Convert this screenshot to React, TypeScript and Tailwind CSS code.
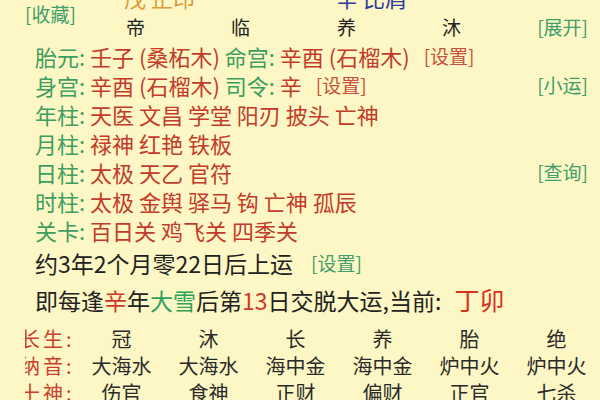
const G = "text-[#3c9e5f]";
const R = "text-[#c23b2c]";
const TAG_G = "text-[19px] text-[#3f9e6c]";

function Pillar({ label, items, tag }: { label: string; items: string; tag?: string }) {
  return (
    <div className="h-[29px] flex items-center whitespace-pre">
      <span className={G}>{label}: </span>
      <span className={R}>{items}</span>
      {tag ? <span className={"ml-auto " + TAG_G}>{tag}</span> : null}
    </div>
  );
}

function BottomRow({ label, values }: { label: string; values: string[] }) {
  return (
    <div className="h-[27px] flex items-center">
      <div className="ml-[25px] w-[60px] overflow-hidden whitespace-nowrap">
        <span className="block -ml-[5px] tracking-[3px] text-[20px] text-[#c8402f]">{label}:</span>
      </div>
      <div className="grid grid-cols-[87px_87px_87px_87px_87px_87px] text-center text-[20px] text-[#2a2a2a] whitespace-nowrap">
        {values.map((v, i) => (
          <span key={i}>{v}</span>
        ))}
      </div>
    </div>
  );
}

export default function App() {
  return (
    <div className="w-[600px] h-[400px] overflow-hidden bg-[#fcf7c4] font-['Noto_Sans_CJK_SC',sans-serif] text-[#222]">
      {/* header */}
      <div className="flex -mt-[18px]">
        <div className={"w-[126px] pl-[25px] pt-[22px] leading-[20px] " + TAG_G}>[收藏]</div>
        <div className="flex-1 flex flex-col">
          <div className="h-[30px] flex items-center text-[22px] whitespace-pre">
            <span className="w-[212px] -ml-[2px] text-[#df9a3c]">戊 正印</span>
            <span className="text-[#2f3c9e]">辛 比肩</span>
          </div>
          <div className="h-[30px] flex items-center justify-between pr-[12px]">
            <div className="grid grid-cols-[105px_106px_105px_40px] text-[19px] text-[#222]">
              <span>帝</span>
              <span>临</span>
              <span>养</span>
              <span>沐</span>
            </div>
            <span className={TAG_G}>[展开]</span>
          </div>
        </div>
      </div>

      {/* pillars */}
      <div className="flex flex-col text-[22px] pl-[35px] pr-[12px]">
        <div className="h-[29px] flex items-center whitespace-pre">
          <span className={G}>胎元: </span>
          <span className={R}>壬子 (桑柘木) </span>
          <span className={G}>命宫: </span>
          <span className={R}>辛酉 (石榴木)</span>
          <span className="ml-[14px] text-[19px] text-[#c8503c]">[设置]</span>
        </div>
        <div className="h-[29px] flex items-center whitespace-pre">
          <span className={G}>身宫: </span>
          <span className={R}>辛酉 (石榴木) </span>
          <span className={G}>司令: </span>
          <span className={R}>辛</span>
          <span className="ml-[14px] text-[19px] text-[#c8503c]">[设置]</span>
          <span className={"ml-auto " + TAG_G}>[小运]</span>
        </div>
        <Pillar label="年柱" items="天医 文昌 学堂 阳刃 披头 亡神" />
        <Pillar label="月柱" items="禄神 红艳 铁板" />
        <Pillar label="日柱" items="太极 天乙 官符" tag="[查询]" />
        <Pillar label="时柱" items="太极 金舆 驿马 钩 亡神 孤辰" />
        <Pillar label="关卡" items="百日关 鸡飞关 四季关" />
      </div>

      {/* luck start */}
      <div className="h-[36px] flex items-center pl-[35px] text-[23px] text-[#222] whitespace-pre">
        <span>约3年2个月零22日后上运</span>
        <span className={"ml-[18px] " + TAG_G}>[设置]</span>
      </div>
      <div className="h-[38px] flex items-center pl-[35px] text-[23px] text-[#222] whitespace-pre">
        <span>即每逢</span>
        <span className="text-[#d0392a]">辛</span>
        <span>年</span>
        <span className="text-[#2fa35a]">大雪</span>
        <span>后第</span>
        <span className="text-[#d0392a]">13</span>
        <span>日交脱大运,当前: </span>
        <span className="ml-[8px] text-[25px] text-[#d8301f]">丁卯</span>
      </div>

      {/* bottom table */}
      <div className="pt-[6px] flex flex-col">
        <BottomRow label="长生" values={["冠", "沐", "长", "养", "胎", "绝"]} />
        <BottomRow label="纳音" values={["大海水", "大海水", "海中金", "海中金", "炉中火", "炉中火"]} />
        <BottomRow label="十神" values={["伤官", "食神", "正财", "偏财", "正官", "七杀"]} />
      </div>
    </div>
  );
}
